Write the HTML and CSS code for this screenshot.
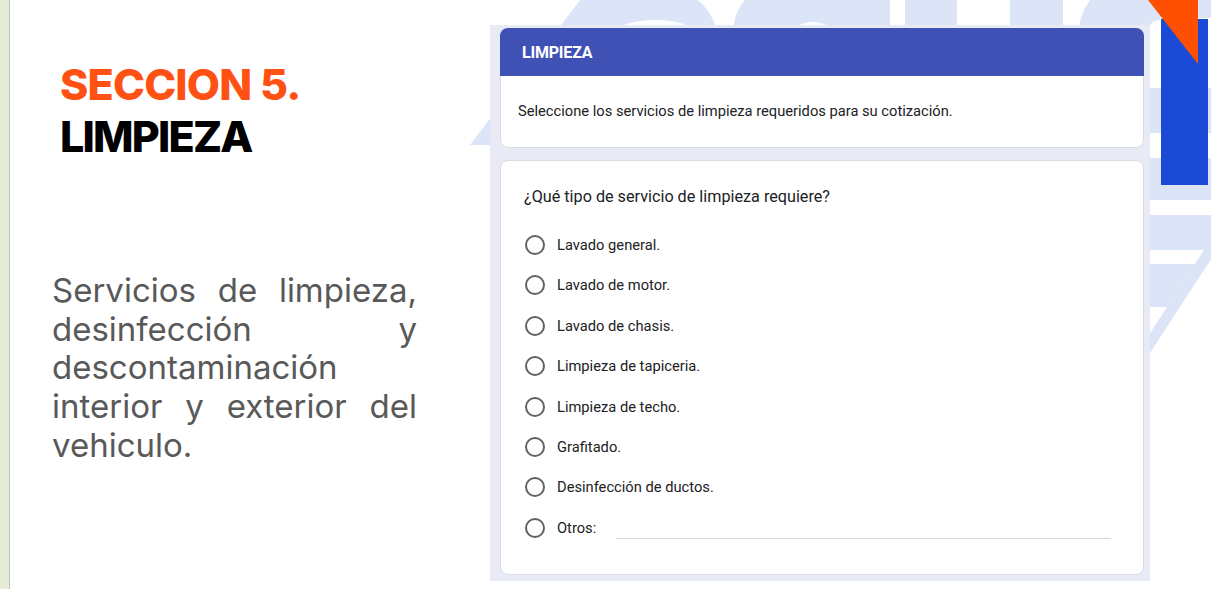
FILE: index.html
```html
<!DOCTYPE html>
<html lang="es">
<head>
<meta charset="utf-8">
<title>Seccion 5 - Limpieza</title>
<link rel="stylesheet" href="styles.css">
</head>
<body>
<div class="slide">
  <svg class="backdrop" width="1211" height="589" viewBox="0 0 1211 589" aria-hidden="true">
    <g fill="#dce4f7">
      <path d="M580,0 L698,0 Q710,10 715,25 L715,145 L470,145 Z"/>
      <path d="M745,0 L890,0 L890,30 L733,30 Q735,10 745,0 Z"/>
      <rect x="905" y="0" width="52" height="30"/>
      <rect x="1010" y="0" width="53" height="30"/>
      <path d="M1090,0 L1211,0 L1211,18 L1165,19 Q1152,20 1148,27 L1078,30 Q1082,10 1090,0 Z"/>
      <rect x="1150" y="88" width="61" height="45"/>
      <rect x="1150" y="158" width="61" height="42"/>
      <rect x="1150" y="215" width="61" height="35"/>
      <polygon points="1204,250 1217,250 1150,353 1137,353"/>
      <polygon points="1140,264 1195,264 1167,307 1140,307"/>
    </g>
    <g fill="#ffffff">
      <ellipse cx="655" cy="32" rx="38" ry="12"/>
      <ellipse cx="813" cy="34" rx="20" ry="12"/>
    </g>
    <rect x="1161" y="19" width="47" height="166" fill="#1a4ad6"/>
    <polygon points="1148,0 1198,0 1198,64" fill="#ff4f00"/>
  </svg>

  <div class="edge"></div>

  <section class="intro">
    <h1 class="title">
      <span class="title-num">SECCION 5.</span>
      <span class="title-name">LIMPIEZA</span>
    </h1>
    <p class="lead">Servicios de limpieza, desinfección y descontaminación interior y exterior del vehiculo.</p>
  </section>

  <section class="form">
    <div class="card card-intro">
      <div class="card-head">LIMPIEZA</div>
      <div class="card-body">Seleccione los servicios de limpieza requeridos para su cotización.</div>
    </div>
    <div class="card card-question">
      <div class="question">¿Qué tipo de servicio de limpieza requiere?</div>
      <ul class="options">
        <li class="option"><span class="radio"></span><span class="label">Lavado general.</span></li>
        <li class="option"><span class="radio"></span><span class="label">Lavado de motor.</span></li>
        <li class="option"><span class="radio"></span><span class="label">Lavado de chasis.</span></li>
        <li class="option"><span class="radio"></span><span class="label">Limpieza de tapiceria.</span></li>
        <li class="option"><span class="radio"></span><span class="label">Limpieza de techo.</span></li>
        <li class="option"><span class="radio"></span><span class="label">Grafitado.</span></li>
        <li class="option"><span class="radio"></span><span class="label">Desinfección de ductos.</span></li>
        <li class="option"><span class="radio"></span><span class="label">Otros:</span><span class="other-line"></span></li>
      </ul>
    </div>
  </section>
</div>
</body>
</html>
```
FILE: styles.css
```css
* { box-sizing: border-box; }

html, body {
  margin: 0;
  padding: 0;
  background: #ffffff;
}

.slide {
  position: relative;
  width: 1211px;
  height: 589px;
  overflow: hidden;
  display: flex;
  align-items: flex-start;
  background: #ffffff;
}

.backdrop {
  position: absolute;
  left: 0;
  top: 0;
  z-index: 0;
}

.edge {
  flex: none;
  width: 10px;
  height: 589px;
  background: #e5ecd8;
  border-right: 1px solid #bfc2bb;
  position: relative;
  z-index: 1;
}

.intro {
  flex: none;
  width: 480px;
  height: 589px;
  position: relative;
  z-index: 1;
  padding-left: 42px;
  font-family: "Inter", "Open Sans", sans-serif;
}

.title {
  margin: 58px 0 0 8px;
  font-size: 43px;
  font-weight: 800;
  line-height: 52px;
  letter-spacing: -0.8px;
}

.title-num {
  display: block;
  color: #ff5114;
}

.title-name {
  display: block;
  color: #000000;
  letter-spacing: -1.8px;
}

.lead {
  margin: 109px 0 0 0;
  width: 365px;
  font-size: 33px;
  font-weight: 400;
  line-height: 38.7px;
  color: #595959;
  text-align: justify;
}

.form {
  flex: none;
  position: relative;
  z-index: 1;
  width: 660px;
  height: 556px;
  margin-top: 25px;
  padding: 3px 6px 0 10px;
  background: #e8eaf6;
  display: flex;
  flex-direction: column;
  gap: 12px;
  font-family: "Roboto", "Liberation Sans", sans-serif;
  color: #202124;
}

.card {
  background: #ffffff;
  border-radius: 8px;
}

.card-head {
  height: 48px;
  background: #3f51b5;
  border-radius: 8px 8px 0 0;
  color: #ffffff;
  font-size: 16px;
  font-weight: 700;
  letter-spacing: -0.2px;
  display: flex;
  align-items: center;
  padding-left: 22px;
}

.card-body {
  height: 72px;
  border: 1px solid #dadce0;
  border-top: none;
  border-radius: 0 0 8px 8px;
  padding: 25px 0 0 17px;
  font-size: 14.7px;
  line-height: 20px;
}

.card-question {
  height: 415px;
  border: 1px solid #dadce0;
  padding: 27px 32px 0 23px;
}

.question {
  font-size: 16.2px;
  line-height: 18px;
}

.options {
  list-style: none;
  margin: 18.8px 0 0 1px;
  padding: 0;
}

.option {
  height: 40.4px;
  display: flex;
  align-items: center;
  font-size: 14.7px;
}

.radio {
  flex: none;
  width: 20px;
  height: 20px;
  border: 2px solid #5f6368;
  border-radius: 50%;
  margin-right: 12px;
}

.other-line {
  flex: 1;
  height: 22px;
  margin-left: 20px;
  border-bottom: 1px solid #d5d7db;
}
```
